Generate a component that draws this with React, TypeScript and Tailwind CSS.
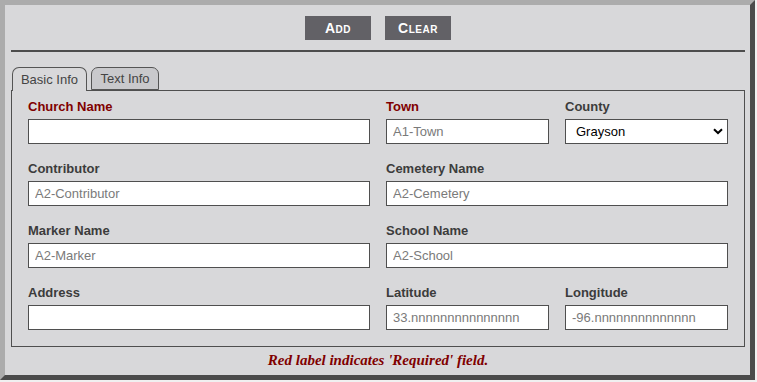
import React from "react";

const font = { fontFamily: "'Liberation Sans', Arial, sans-serif" };

function Field({
  label,
  placeholder,
  required,
}: {
  label: string;
  placeholder?: string;
  required?: boolean;
}) {
  return (
    <div className="flex flex-col">
      <label
        className={`h-[18px] text-[13px] leading-[18px] font-bold ${
          required ? "text-[#800000]" : "text-[#3c3c3c]"
        }`}
      >
        {label}
      </label>
      <input
        type="text"
        placeholder={placeholder}
        className="mt-[3px] h-[25px] w-full border border-[#4f4f4f] bg-white px-[6px] text-[13px] text-black placeholder:text-[#7a7a7a] outline-none"
      />
    </div>
  );
}

function CountySelect() {
  return (
    <div className="flex flex-col">
      <label className="h-[18px] text-[13px] leading-[18px] font-bold text-[#3c3c3c]">
        County
      </label>
      <div className="relative mt-[3px]">
        <select
          defaultValue="Grayson"
          className="h-[25px] w-full appearance-none border border-[#4f4f4f] bg-white pl-[10px] text-[13px] text-black outline-none"
        >
          <option>Grayson</option>
          <option>Collin</option>
          <option>Fannin</option>
        </select>
        <svg
          className="pointer-events-none absolute right-[5px] top-[9px]"
          width="10"
          height="7"
          viewBox="0 0 10 7"
        >
          <path d="M1 1.2 L5 5 L9 1.2" fill="none" stroke="#000" strokeWidth="2" />
        </svg>
      </div>
    </div>
  );
}

export default function App() {
  return (
    <div className="h-[382px] w-[757px] bg-[#f0f0f0]" style={font}>
      <div className="flex h-[380px] w-[755px] flex-col border-[5px] border-t-[#acacac] border-l-[#acacac] border-r-[#4b4b4b] border-b-[#4b4b4b] bg-[#d8d8da] pl-[6px] pr-[5px]">
        <div className="mt-[11px] flex justify-center gap-[14px]">
          <button className="h-[24px] w-[66px] bg-[#626166] text-[14px] font-bold tracking-[0.5px] text-white [font-variant:small-caps]">
            Add
          </button>
          <button className="h-[24px] w-[66px] bg-[#626166] text-[14px] font-bold tracking-[0.5px] text-white [font-variant:small-caps]">
            Clear
          </button>
        </div>
        <div className="mt-[10px] h-[2px] w-full bg-[#4d4d4d]" />

        <div className="mt-[15px] flex gap-[4px] pl-[1px]">
          <div className="relative z-10 flex h-[24px] w-[75px] items-center justify-center rounded-t-[7px] border border-b-0 border-[#555] bg-[#d8d8da] text-[13px] text-[#444]">
            Basic Info
          </div>
          <div className="flex h-[23px] w-[68px] items-center justify-center rounded-t-[7px] border border-[#555] bg-[#c9c9cc] text-[13px] text-[#444]">
            Text Info
          </div>
        </div>

        <div className="-mt-px border border-[#4f4f4f] px-[16px] pt-[7px] pb-[16px]">
          <div className="grid grid-cols-2 gap-x-[16px] gap-y-[16px]">
            <Field label="Church Name" required />
            <div className="grid grid-cols-2 gap-x-[16px]">
              <Field label="Town" placeholder="A1-Town" required />
              <CountySelect />
            </div>
            <Field label="Contributor" placeholder="A2-Contributor" />
            <Field label="Cemetery Name" placeholder="A2-Cemetery" />
            <Field label="Marker Name" placeholder="A2-Marker" />
            <Field label="School Name" placeholder="A2-School" />
            <Field label="Address" />
            <div className="grid grid-cols-2 gap-x-[16px]">
              <Field label="Latitude" placeholder="33.nnnnnnnnnnnnnnn" />
              <Field label="Longitude" placeholder="-96.nnnnnnnnnnnnnn" />
            </div>
          </div>
        </div>

        <p
          className="mt-[3px] text-center text-[15px] leading-[20px] font-bold italic text-[#800000]"
          style={{ fontFamily: "'Liberation Serif', 'Times New Roman', serif" }}
        >
          Red label indicates 'Required' field.
        </p>
      </div>
    </div>
  );
}
